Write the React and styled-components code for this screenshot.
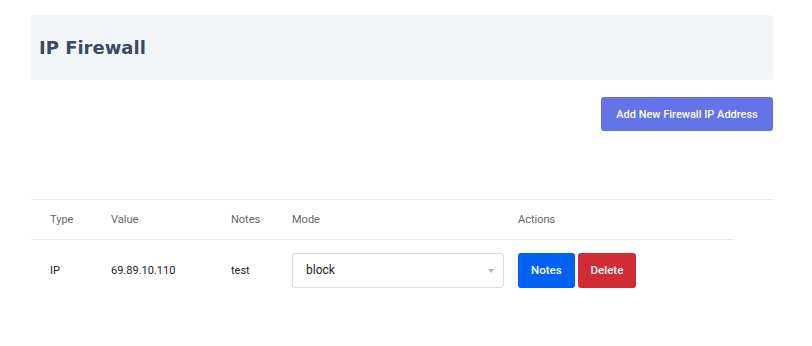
import React, { useState } from 'react'
import styled, { createGlobalStyle } from 'styled-components'

const GlobalStyle = createGlobalStyle`
  html, body {
    margin: 0;
    padding: 0;
    background: #fff;
  }
  body {
    font-family: Roboto, "Liberation Sans", Arial, sans-serif;
  }
`

const rules = [
  { id: 1, type: 'IP', value: '69.89.10.110', notes: 'test', mode: 'block' },
]

const App = () => {
  const [list, setList] = useState(rules)

  const changeMode = (id, mode) => {
    setList(list.map((r) => (r.id === id ? { ...r, mode } : r)))
  }

  return (
    <>
      <GlobalStyle />
      <Page>
        <Header>
          <Title>IP Firewall</Title>
        </Header>

        <Toolbar>
          <AddButton>Add New Firewall IP Address</AddButton>
        </Toolbar>

        <TableCard>
          <Table>
            <HeadRow>
              <Cell>Type</Cell>
              <Cell>Value</Cell>
              <Cell>Notes</Cell>
              <Cell>Mode</Cell>
              <Cell>Actions</Cell>
            </HeadRow>
            {list.map((r) => (
              <BodyRow key={r.id}>
                <Cell>{r.type}</Cell>
                <Cell>{r.value}</Cell>
                <Cell>{r.notes}</Cell>
                <Cell>
                  <SelectWrap>
                    <Select value={r.mode} onChange={(e) => changeMode(r.id, e.target.value)}>
                      <option value="block">block</option>
                      <option value="allow">allow</option>
                    </Select>
                    <Caret />
                  </SelectWrap>
                </Cell>
                <Actions>
                  <ActionButton color="#0061f2">Notes</ActionButton>
                  <ActionButton color="#d12b35">Delete</ActionButton>
                </Actions>
              </BodyRow>
            ))}
          </Table>
        </TableCard>
      </Page>
    </>
  )
}

export default App

const Page = styled.div`
  width: 742px;
  padding: 15px 0 0 31px;
`

const Header = styled.div`
  height: 65px;
  background: #f3f6f9;
  border-radius: 4px;
  display: flex;
  align-items: center;
  padding-left: 8px;
`

const Title = styled.h1`
  margin: 0;
  font-family: "DejaVu Sans", Verdana, sans-serif;
  font-weight: bold;
  font-size: 18px;
  color: #3b4867;
`

const Toolbar = styled.div`
  display: flex;
  justify-content: flex-end;
  margin-top: 17px;
`

const AddButton = styled.button`
  height: 34px;
  width: 172px;
  border: none;
  border-radius: 3px;
  background: #6573e8;
  color: #fff;
  font-family: Roboto, sans-serif;
  font-size: 11px;
  font-weight: 500;
  cursor: pointer;
`

const TableCard = styled.div`
  margin-top: 68px;
  border-top: 1px solid #e8e8e8;
`

const Table = styled.div`
  width: 703px;
`

const Row = styled.div`
  display: grid;
  grid-template-columns: 61px 120px 61px 226px 1fr;
  align-items: center;
  padding: 0 19px;
`

const HeadRow = styled(Row)`
  height: 39px;
  border-bottom: 1px solid #e8e8e8;
  color: #666;
`

const BodyRow = styled(Row)`
  height: 60px;
  color: #222;
`

const Cell = styled.div`
  font-size: 11px;
  white-space: nowrap;
`

const SelectWrap = styled.div`
  position: relative;
  width: 212px;
`

const Select = styled.select`
  appearance: none;
  width: 100%;
  height: 35px;
  border: 1px solid #dcdcdc;
  border-radius: 3px;
  background: #fff;
  padding: 0 13px;
  font-family: Roboto, sans-serif;
  font-size: 12px;
  color: #222;
  outline: none;
`

const Caret = styled.span`
  position: absolute;
  right: 10px;
  top: 16px;
  border-left: 3.5px solid transparent;
  border-right: 3.5px solid transparent;
  border-top: 4px solid #b5b5b5;
  pointer-events: none;
`

const Actions = styled.div`
  display: flex;
  gap: 3px;
`

const ActionButton = styled.button`
  height: 35px;
  padding: 0 13px;
  border: none;
  border-radius: 3px;
  background: ${(p) => p.color};
  color: #fff;
  font-family: Roboto, sans-serif;
  font-size: 11.5px;
  font-weight: 500;
  cursor: pointer;
`
